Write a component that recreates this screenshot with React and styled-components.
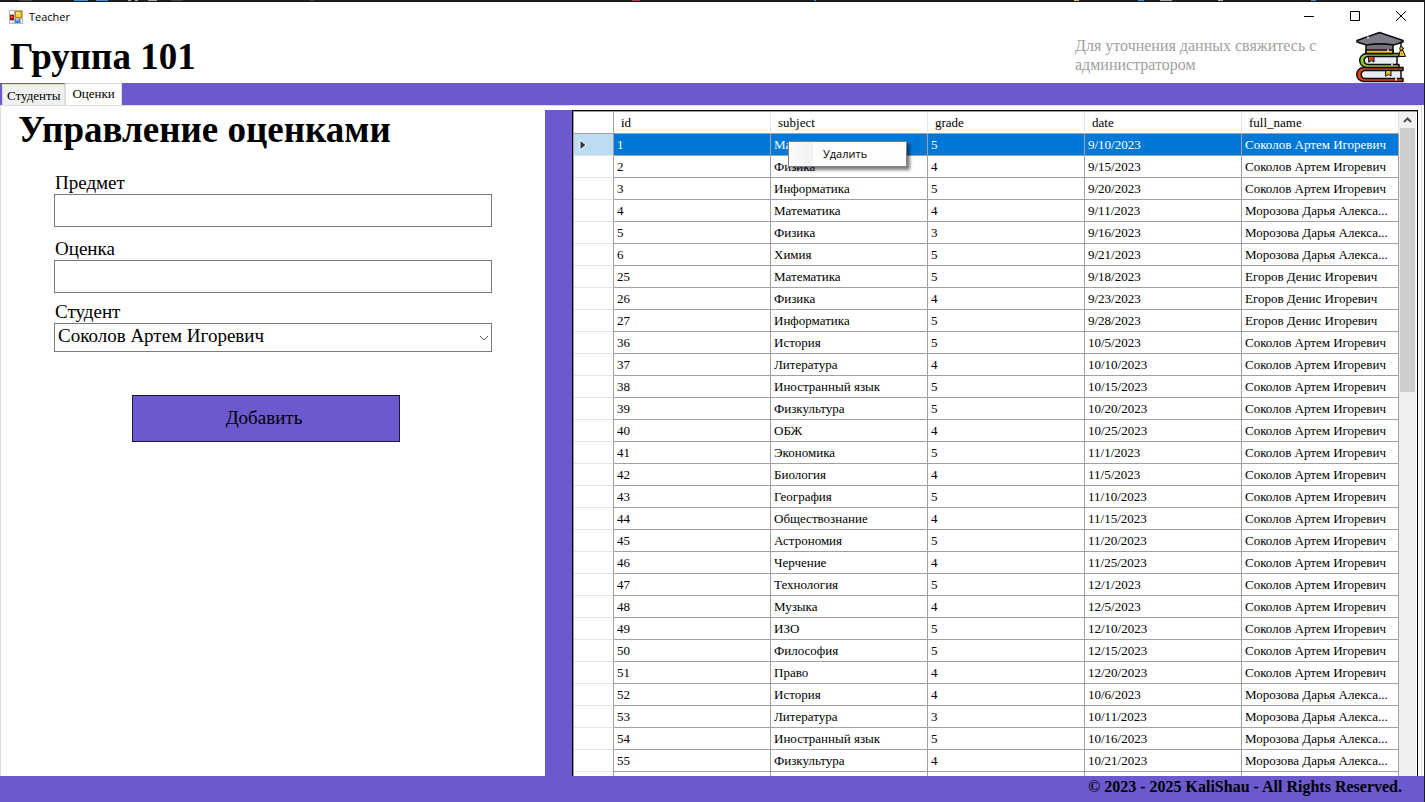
import React, { useState } from "react";
import styled, { createGlobalStyle } from "styled-components";

const purple = "#6a5acd";
const serif = `"Liberation Serif", "Times New Roman", serif`;

const Global = createGlobalStyle`
  * { box-sizing: border-box; }
  body { margin: 0; background: #fff; color: #000; font-family: ${serif}; }
`;

const Desktop = styled.div`
  height: 100vh;
  display: flex;
  flex-direction: column;
  overflow: hidden;
  background: #1c1c1e;
`;
const TaskStrip = styled.svg`
  display: block;
  width: 100%;
  height: 2px;
  flex: none;
`;
const Window = styled.div`
  flex: 1;
  min-height: 0;
  margin-right: 1px;
  display: flex;
  flex-direction: column;
  background: #fff;
`;
const TitleBar = styled.header`
  height: 29px;
  flex: none;
  display: flex;
  align-items: center;
  padding-left: 9px;
  gap: 6px;
`;
const TitleText = styled.span`
  flex: 1;
  font: 11px/16px "Open Sans", sans-serif;
`;
const WindowControls = styled.div`
  display: flex;
`;
const WindowButton = styled.button`
  width: 46px;
  height: 29px;
  padding: 0;
  border: 0;
  background: none;
  display: grid;
  place-items: center;
`;
const Header = styled.div`
  height: 52px;
  flex: none;
  display: flex;
  justify-content: space-between;
  padding: 0 15px 0 10px;
`;
const GroupTitle = styled.h1`
  margin: 0;
  font-size: 37px;
  line-height: 52px;
`;
const HeaderSide = styled.div`
  display: flex;
  gap: 16px;
`;
const Hint = styled.p`
  margin: 0;
  padding-top: 5px;
  width: 264px;
  font-size: 16px;
  line-height: 19px;
  color: #a0a0a0;
`;
const TabBar = styled.nav`
  height: 22px;
  flex: none;
  display: flex;
  align-items: flex-end;
  padding-left: 2px;
  background: ${purple};
`;
const Tab = styled.button`
  height: ${(p) => (p.$active ? 22 : 21)}px;
  padding: ${(p) => (p.$active ? "0 6px 2px" : "1px 4px 0")};
  border: 1px solid #dcdcdc;
  border-bottom: 0;
  background: ${(p) => (p.$active ? "#fff" : "#f0f0f0")};
  font: 13px/18px ${serif};
  color: #000;
`;
const TabPage = styled.main`
  flex: 1;
  min-height: 0;
  display: grid;
  grid-template-columns: minmax(0, 544fr) 27px minmax(0, 846fr);
  grid-template-rows: minmax(0, 1fr);
  border: 1px solid #dcdcdc;
  border-bottom: 0;
  margin-right: 2px;
  padding: 4px 3px 0 0;
`;
const FormPane = styled.section`
  min-width: 0;
  padding: 0 53px;
`;
const PaneTitle = styled.h2`
  margin: 0 0 0 -36px;
  font-size: 37px;
  line-height: 40px;
  white-space: nowrap;
`;
const GradeForm = styled.form`
  display: flex;
  flex-direction: column;
  padding-top: 22px;
`;
const Field = styled.div`
  display: flex;
  flex-direction: column;
  margin-bottom: ${(p) => p.$gap}px;
`;
const Label = styled.label`
  padding: 0 1px;
  font-size: 19px;
  line-height: 22px;
`;
const TextBox = styled.input`
  height: 33px;
  padding: 0 4px;
  border: 1px solid #7a7a7a;
  background: #fff;
  font: 19px/22px ${serif};
`;
const SelectWrap = styled.div`
  display: grid;
  align-items: center;
`;
const Select = styled.select`
  grid-area: 1 / 1;
  height: 29px;
  padding: 0 20px 3px 3px;
  border: 1px solid #7a7a7a;
  border-radius: 0;
  appearance: none;
  background: #fff;
  color: #000;
  font: 19px/22px ${serif};
`;
const SelectArrow = styled.svg`
  grid-area: 1 / 1;
  justify-self: end;
  margin-right: 3px;
  pointer-events: none;
`;
const AddButton = styled.button`
  align-self: center;
  width: 268px;
  height: 47px;
  margin-right: 14px;
  padding: 0 4px 2px 0;
  border: 1px solid #1a1640;
  background: ${purple};
  color: #000;
  font: 19px/22px ${serif};
`;
const Divider = styled.div`
  background: ${purple};
`;
const GridPane = styled.section`
  min-width: 0;
  display: flex;
  overflow: hidden;
  border: 1px solid #000;
  border-bottom: 0;
  box-shadow: inset 1px 1px #a0a0a0;
  padding: 1px 1px 0;
`;
const TableArea = styled.div`
  position: relative;
  flex: 1;
  min-width: 0;
`;
const Table = styled.table`
  width: 100%;
  table-layout: fixed;
  border-collapse: separate;
  border-spacing: 0;
  font-size: 13px;
  line-height: 18px;
`;
const MarkerCol = styled.col`
  width: 40px;
`;
const HeadCell = styled.th`
  height: 22px;
  padding: 0 7px;
  border-right: 1px solid ${(p) => (p.$corner ? "#a0a0a0" : "#e5e5e5")};
  border-bottom: 1px solid #a0a0a0;
  text-align: left;
  font-weight: 400;
`;
const MarkerCell = styled.th`
  height: 22px;
  padding: 0 0 0 5px;
  border-right: 1px solid #a0a0a0;
  border-bottom: 1px solid #e5e5e5;
  background: ${(p) => (p.$selected ? "#bcdcf4" : "#fff")};
  svg { display: block; }
`;
const Cell = styled.td`
  height: 22px;
  padding: 0 2px 0 3px;
  border-right: 1px solid #a0a0a0;
  border-bottom: 1px solid #a0a0a0;
  overflow: hidden;
  white-space: nowrap;
  text-overflow: ellipsis;
  background: ${(p) => (p.$selected ? "#0078d7" : "#fff")};
  color: ${(p) => (p.$selected ? "#fff" : "#000")};
`;
const ScrollBar = styled.div`
  flex: none;
  width: 17px;
  background: #f0f0f0;
`;
const ScrollButton = styled.button`
  display: grid;
  place-items: center;
  width: 17px;
  height: 16px;
  padding: 0;
  border: 0;
  background: none;
`;
const ScrollThumb = styled.div`
  height: 264px;
  margin: 0 1px;
  background: #cdcdcd;
`;
const ContextMenu = styled.div`
  position: absolute;
  left: 214px;
  top: 29px;
  width: 119px;
  height: 26px;
  padding: 1px;
  border: 1px solid #808080;
  background: linear-gradient(90deg, #fcfcfc 0, #f0f0f0 24px, #fdfdfd 24px);
  box-shadow: 3px 3px 3px rgba(0, 0, 0, 0.5);
`;
const MenuItem = styled.button`
  width: 100%;
  height: 22px;
  padding: 0 0 0 33px;
  border: 0;
  background: none;
  text-align: left;
  color: #000;
  font: 11px/20px "Open Sans", sans-serif;
`;
const Footer = styled.footer`
  flex: none;
  height: 26px;
  padding-right: 22px;
  background: ${purple};
  text-align: right;
  font-size: 16px;
  font-weight: 700;
  line-height: 22px;
`;

const S = "Соколов Артем Игоревич";
const M = "Морозова Дарья Алекса...";
const E = "Егоров Денис Игоревич";
const rows = [
  [1, "Математика", 5, "9/10/2023", S],
  [2, "Физика", 4, "9/15/2023", S],
  [3, "Информатика", 5, "9/20/2023", S],
  [4, "Математика", 4, "9/11/2023", M],
  [5, "Физика", 3, "9/16/2023", M],
  [6, "Химия", 5, "9/21/2023", M],
  [25, "Математика", 5, "9/18/2023", E],
  [26, "Физика", 4, "9/23/2023", E],
  [27, "Информатика", 5, "9/28/2023", E],
  [36, "История", 5, "10/5/2023", S],
  [37, "Литература", 4, "10/10/2023", S],
  [38, "Иностранный язык", 5, "10/15/2023", S],
  [39, "Физкультура", 5, "10/20/2023", S],
  [40, "ОБЖ", 4, "10/25/2023", S],
  [41, "Экономика", 5, "11/1/2023", S],
  [42, "Биология", 4, "11/5/2023", S],
  [43, "География", 5, "11/10/2023", S],
  [44, "Обществознание", 4, "11/15/2023", S],
  [45, "Астрономия", 5, "11/20/2023", S],
  [46, "Черчение", 4, "11/25/2023", S],
  [47, "Технология", 5, "12/1/2023", S],
  [48, "Музыка", 4, "12/5/2023", S],
  [49, "ИЗО", 5, "12/10/2023", S],
  [50, "Философия", 5, "12/15/2023", S],
  [51, "Право", 4, "12/20/2023", S],
  [52, "История", 4, "10/6/2023", M],
  [53, "Литература", 3, "10/11/2023", M],
  [54, "Иностранный язык", 5, "10/16/2023", M],
  [55, "Физкультура", 4, "10/21/2023", M],
  ["", "", "", "", ""],
];
const columns = ["id", "subject", "grade", "date", "full_name"];

const AppIcon = () => (
  <svg width="14" height="14" viewBox="0 0 14 14" aria-hidden="true">
    <path fill="#b8b8b8" d="M0 0h14v14H0z" />
    <path fill="#fff" d="M1 1h4v3H1zM1 11h2v2H1zM4 11h1v2H4zM12 9h1v4h-1z" />
    <path fill="#b8860b" d="M6 1h7v7H6z" />
    <path fill="#ffcf3a" d="M7 2h5v5H7z" />
    <path fill="#ffe68a" d="M7 2h3v2H7z" />
    <path fill="#a01008" d="M1 5h4v5H1z" />
    <path fill="#e8543c" d="M2 6h2v2H2z" />
    <path fill="#3f78d0" d="M6 9h5v4H6z" />
    <path fill="#8fbcf5" d="M7 9h3v2H7z" />
  </svg>
);

const BooksLogo = () => (
  <svg width="54" height="52" viewBox="0 0 54 52" role="img" aria-label="Логотип" stroke="#0c0c10" strokeWidth="1.5" strokeLinejoin="round" strokeLinecap="round">
    <path d="M46 38v10H9V38z" fill="#e9edf1" stroke="none" />
    <path d="M46 39v8" fill="none" />
    <path d="M48 36.500H8.500C-.5 37.500-.5 49.500 8.500 50.500H48V47.500H10c-5-.5-5-7.500 0-8h38z" fill="#e2441f" />
    <path d="M31 39.500h5v5.500l-2.500-1.500-2.500 1.500z" fill="#f6b90f" strokeWidth="1" />
    <path d="M42 24v9H11v-9z" fill="#e9edf1" stroke="none" />
    <path d="M42 25v8" fill="none" />
    <path d="M44 22.500H11.500c-9 1-9 13 0 14H44V33.500H13c-5-.5-5-7.500 0-8h31z" fill="#8cc832" />
    <path d="M14 25.500h5v5.500l-2.500-1.500-2.500 1.500z" fill="#e2441f" strokeWidth="1" />
    <path d="M11 12h27v10.500H11z" fill="#73717c" />
    <path d="M11 19h27v3.500H11z" fill="#f6b90f" />
    <path d="M2 9.500L24.500 1.500 48 9.500v1.500L38.500 14c-9-1.500-18-1.500-27 0L2 11z" fill="#7d7b87" />
    <path d="M46 11v7" fill="none" />
    <circle cx="46.500" cy="17.500" r="1.800" fill="#f6b90f" strokeWidth="1" />
    <path d="M45.500 19.500h2.500l2.500 6h-6.500z" fill="#f6b90f" strokeWidth="1" />
    <path d="M33 19v1M37 33v1M41 47v2M13 6v1" stroke="#fff" />
  </svg>
);

const controls = [
  ["Свернуть", "M0 5.500h10"],
  ["Развернуть", "M.5.500h9v9h-9z"],
  ["Закрыть", "M0 0l10 10M10 0L0 10"],
];

export default function App() {
  const [subject, setSubject] = useState("");
  const [grade, setGrade] = useState("");
  return (
    <>
      <Global />
      <Desktop>
        <TaskStrip viewBox="0 0 1425 2" preserveAspectRatio="none" aria-hidden="true">
          <path fill="#3f8fd0" d="M74 0h14v1H74zM96 0h12v1H96zM814 0h2v1h-2zM1138 0h6v1h-6zM1311 0h5v1h-5z" />
          <path fill="#a8a8a8" d="M128 0h3v1h-3zM135 0h3v1h-3zM148 0h9v1h-9zM1160 0h12v1h-12zM1218 0h5v1h-5z" />
          <path fill="#444" d="M19 0h13v1H19zM171 0h12v1h-12zM310 0h4v1h-4z" />
          <path fill="#b03a40" d="M632 0h8v1h-8z" />
          <path fill="#d9b26a" d="M1074 0h5v1h-5z" />
        </TaskStrip>
        <Window>
          <TitleBar>
            <AppIcon />
            <TitleText>Teacher</TitleText>
            <WindowControls>
              {controls.map(([name, d]) => (
                <WindowButton key={name} type="button" aria-label={name}>
                  <svg width="10" height="11" viewBox="0 0 10 11" fill="none" stroke="#000"><path d={d} /></svg>
                </WindowButton>
              ))}
            </WindowControls>
          </TitleBar>
          <Header>
            <GroupTitle>Группа 101</GroupTitle>
            <HeaderSide>
              <Hint>Для уточнения данных свяжитесь с администратором</Hint>
              <BooksLogo />
            </HeaderSide>
          </Header>
          <TabBar>
            <Tab type="button">Студенты</Tab>
            <Tab type="button" $active>Оценки</Tab>
          </TabBar>
          <TabPage>
            <FormPane>
              <PaneTitle>Управление оценками</PaneTitle>
              <GradeForm onSubmit={(e) => e.preventDefault()}>
                <Field $gap={11}>
                  <Label htmlFor="subject">Предмет</Label>
                  <TextBox id="subject" value={subject} onChange={(e) => setSubject(e.target.value)} />
                </Field>
                <Field $gap={8}>
                  <Label htmlFor="grade">Оценка</Label>
                  <TextBox id="grade" value={grade} onChange={(e) => setGrade(e.target.value)} />
                </Field>
                <Field $gap={43}>
                  <Label htmlFor="student">Студент</Label>
                  <SelectWrap>
                    <Select id="student" defaultValue={S}>
                      <option>{S}</option>
                      <option>{E}</option>
                    </Select>
                    <SelectArrow width="10" height="6" viewBox="0 0 10 6" fill="none" stroke="#555"><path d="M1 1l4 4 4-4" /></SelectArrow>
                  </SelectWrap>
                </Field>
                <AddButton type="submit">Добавить</AddButton>
              </GradeForm>
            </FormPane>
            <Divider />
            <GridPane>
              <TableArea>
                <Table>
                  <colgroup>
                    <MarkerCol />
                    {columns.map((c) => <col key={c} />)}
                  </colgroup>
                  <thead>
                    <tr>
                      <HeadCell $corner />
                      {columns.map((c) => <HeadCell key={c}>{c}</HeadCell>)}
                    </tr>
                  </thead>
                  <tbody>
                    {rows.map((row, i) => (
                      <tr key={row[0]}>
                        <MarkerCell $selected={i === 0}>
                          {i === 0 && (
                            <svg width="8" height="12" viewBox="0 0 8 12"><path d="M1 1l6 5-6 5z" fill="#333" stroke="#fff" /></svg>
                          )}
                        </MarkerCell>
                        {row.map((v, j) => <Cell key={j} $selected={i === 0}>{v}</Cell>)}
                      </tr>
                    ))}
                  </tbody>
                </Table>
                <ContextMenu role="menu">
                  <MenuItem type="button" role="menuitem">Удалить</MenuItem>
                </ContextMenu>
              </TableArea>
              <ScrollBar>
                <ScrollButton type="button" aria-label="Вверх">
                  <svg width="9" height="6" viewBox="0 0 9 6" fill="none" stroke="#505050" strokeWidth="2"><path d="M1 5l3.500-3.500L8 5" /></svg>
                </ScrollButton>
                <ScrollThumb />
              </ScrollBar>
            </GridPane>
          </TabPage>
          <Footer>© 2023 - 2025 KaliShau - All Rights Reserved.</Footer>
        </Window>
      </Desktop>
    </>
  );
}
